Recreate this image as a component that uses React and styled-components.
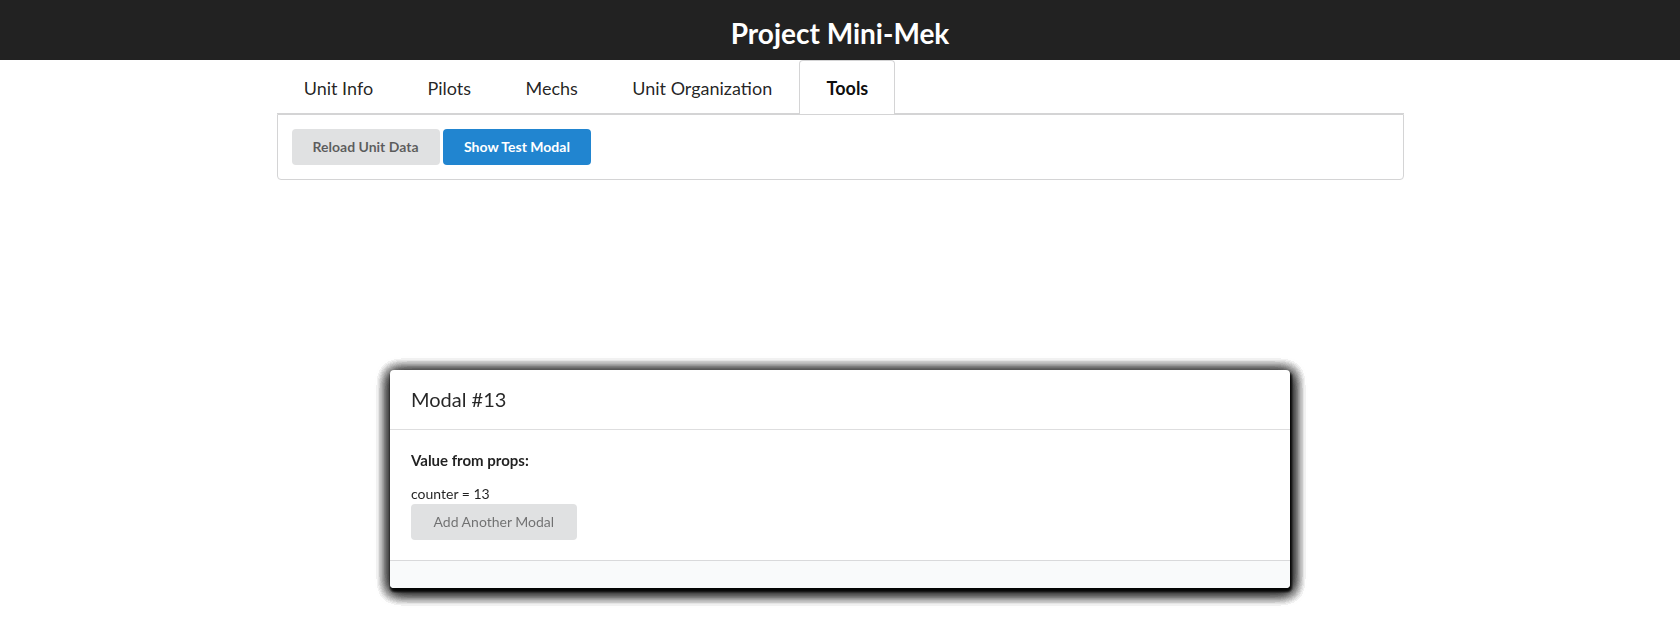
import React from "react";
import styled, { createGlobalStyle, css } from "styled-components";

const GlobalStyle = createGlobalStyle`
  html, body {
    margin: 0;
    padding: 0;
    background: #ffffff;
  }
  body {
    font-family: Lato, "Helvetica Neue", Arial, Helvetica, sans-serif;
    font-size: 14px;
    line-height: 1.4285em;
    color: rgba(0, 0, 0, 0.87);
  }
  * { box-sizing: border-box; }
`;

const Page = styled.div`
  min-height: 640px;
`;

const TitleBar = styled.header`
  background: #222222;
  height: 60px;
  padding: 15px 0 9px;
  display: flex;
  justify-content: center;
`;

const Title = styled.h1`
  margin: 0;
  font-size: 28px;
  line-height: 36px;
  font-weight: 700;
  color: #ffffff;
`;

const Container = styled.main`
  width: 1127px;
  margin: 0 auto;
`;

const TabMenu = styled.nav`
  display: flex;
  align-items: stretch;
  font-size: 18px;
  border-bottom: 1px solid #d4d4d5;
`;

const TabItem = styled.div`
  display: flex;
  align-items: center;
  padding: 16.7px 26.2px;
  line-height: 1;
  border: 1px solid transparent;
  border-top-width: 2px;
  border-bottom: none;
  color: rgba(0, 0, 0, 0.87);
  cursor: pointer;
  ${(p) =>
    p.$active &&
    css`
      background: #ffffff;
      border-color: #d4d4d5;
      border-top-width: 1px;
      border-radius: 4px 4px 0 0;
      margin-bottom: -1px;
      font-weight: 700;
      color: rgba(0, 0, 0, 0.95);
    `}
`;

const TabPane = styled.section`
  display: flex;
  gap: 3.5px;
  padding: 14px;
  border: 1px solid #d4d4d5;
  border-radius: 0 0 4px 4px;
`;

const Button = styled.button`
  font-family: Lato, "Helvetica Neue", Arial, Helvetica, sans-serif;
  font-size: 14px;
  line-height: 1em;
  padding: 11px ${(p) => (p.$muted ? "22.5px" : "21px")};
  border: none;
  border-radius: 4px;
  background: ${(p) => (p.$primary ? "#2185d0" : "#e0e1e2")};
  color: ${(p) =>
    p.$primary ? "#ffffff" : p.$muted ? "rgba(0,0,0,0.5)" : "rgba(0,0,0,0.6)"};
  font-weight: ${(p) => (p.$muted ? 400 : 700)};
  cursor: pointer;
`;

const ModalLayer = styled.div`
  position: fixed;
  inset: 0;
  display: flex;
  justify-content: center;
  align-items: flex-start;
  padding-top: 370px;
  pointer-events: none;
`;

const stackedShadow = Array.from({ length: 13 })
  .map(
    () =>
      "1px 3px 3px 0 rgba(0,0,0,0.2), 1px 3px 15px 2px rgba(0,0,0,0.2)"
  )
  .join(", ");

const Modal = styled.div`
  width: 900px;
  background: #ffffff;
  border-radius: 4px;
  box-shadow: ${stackedShadow};
  pointer-events: auto;
  overflow: hidden;
`;

const ModalHeader = styled.div`
  padding: 16.5px 21px 16.5px;
  font-size: 20px;
  line-height: 1.28571429em;
  font-weight: 400;
  color: rgba(0, 0, 0, 0.85);
  border-bottom: 1px solid rgba(34, 36, 38, 0.15);
`;

const ModalContent = styled.div`
  padding: 21px 21px 20.5px;
  display: flex;
  flex-direction: column;
  align-items: flex-start;
`;

const ContentHeader = styled.h4`
  margin: 0 0 13.5px;
  font-size: 15px;
  line-height: 1.28571429em;
  font-weight: 700;
  color: rgba(0, 0, 0, 0.87);
`;

const Counter = styled.div`
  font-size: 14px;
  line-height: 20px;
`;

const ModalActions = styled.div`
  background: #f9fafb;
  padding: 13.5px;
  border-top: 1px solid rgba(34, 36, 38, 0.15);
`;

const tabs = ["Unit Info", "Pilots", "Mechs", "Unit Organization", "Tools"];

export default function App() {
  const counter = 13;
  return (
    <Page>
      <GlobalStyle />
      <TitleBar>
        <Title>Project Mini-Mek</Title>
      </TitleBar>
      <Container>
        <TabMenu>
          {tabs.map((t) => (
            <TabItem key={t} $active={t === "Tools"}>
              {t}
            </TabItem>
          ))}
        </TabMenu>
        <TabPane>
          <Button>Reload Unit Data</Button>
          <Button $primary>Show Test Modal</Button>
        </TabPane>
      </Container>
      <ModalLayer>
        <Modal>
          <ModalHeader>Modal #{counter}</ModalHeader>
          <ModalContent>
            <ContentHeader>Value from props:</ContentHeader>
            <Counter>counter = {counter}</Counter>
            <Button $muted>Add Another Modal</Button>
          </ModalContent>
          <ModalActions />
        </Modal>
      </ModalLayer>
    </Page>
  );
}
